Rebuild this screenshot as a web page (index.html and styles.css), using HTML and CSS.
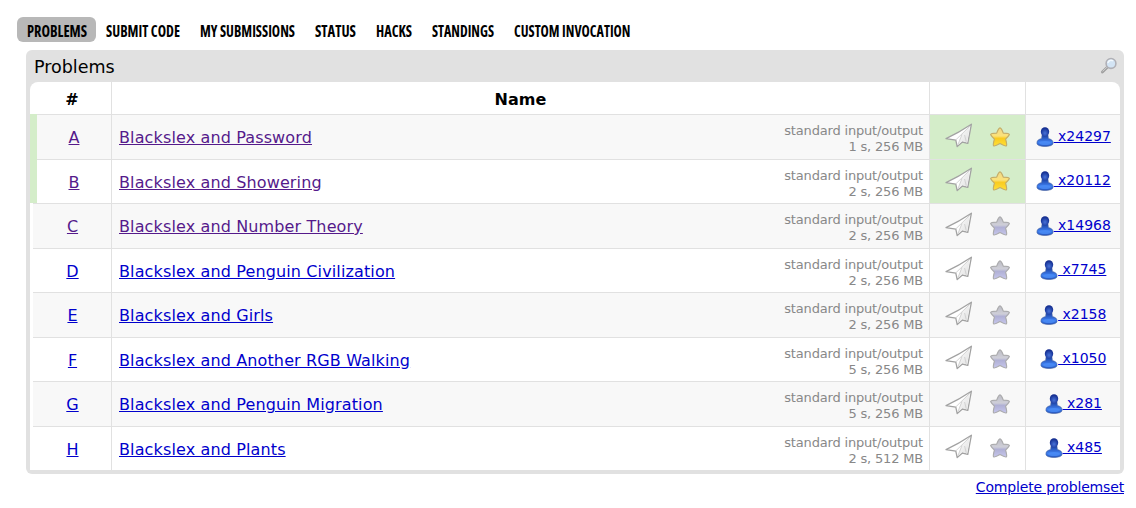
FILE: index.html
```
<!DOCTYPE html>
<html lang="en">
<head>
<meta charset="utf-8">
<title>Problems</title>
<link rel="stylesheet" href="styles.css">
</head>
<body>
<svg class="defs" width="0" height="0" aria-hidden="true">
  <defs>
    <linearGradient id="gold" x1="0" y1="0" x2="0" y2="1"><stop offset="0" stop-color="#f0d98a"/><stop offset=".45" stop-color="#fbe27a"/><stop offset=".58" stop-color="#f9cb20"/><stop offset="1" stop-color="#ffdf35"/></linearGradient>
    <linearGradient id="silver" x1="0" y1="0" x2="0" y2="1"><stop offset="0" stop-color="#bcbcc4"/><stop offset=".45" stop-color="#cfcfd8"/><stop offset=".58" stop-color="#b0b0d4"/><stop offset="1" stop-color="#c6c6ec"/></linearGradient>
    <radialGradient id="head" cx=".5" cy=".65" r=".6"><stop offset="0" stop-color="#4772d8"/><stop offset="1" stop-color="#10298c"/></radialGradient>
    <linearGradient id="body" x1="0" y1="0" x2="0" y2="1"><stop offset="0" stop-color="#153596"/><stop offset=".65" stop-color="#3f80f0"/><stop offset="1" stop-color="#2455bd"/></linearGradient>
    <linearGradient id="fold" x1="0" y1="0" x2="1" y2="1"><stop offset="0" stop-color="#fff"/><stop offset="1" stop-color="#dedede"/></linearGradient>
  </defs>
  <symbol id="plane" viewBox="0 0 28 26">
    <path d="M1 15.6 Q14 9.5 26.4 1.2 L22.8 20.3 17.4 19 12.2 23.6 10.8 17.2Z" fill="#fff" stroke="#a2a2a2" stroke-width="1.3" stroke-linejoin="round"/>
    <path d="M25 3 16.5 11.5 12.8 22 17.5 18 22 19.4Z" fill="url(#fold)"/>
    <path d="M25 3 10.9 16.8M17 11.5 12.8 22M19.6 12 21.2 18.6" fill="none" stroke="#cecece" stroke-width=".9"/>
  </symbol>
  <symbol id="star" viewBox="0 0 20 20">
    <path d="M10 .8Q11.4 1 13.3 6.1 19.2 6.2 19.4 7.6 18.8 9 15.6 12.1 17.3 17.8 16.3 18.9 14.8 19.4 10 16.6 5.2 19.4 3.7 18.9 2.7 17.8 4.4 12.1 1.2 9 .6 7.6 .8 6.2 6.7 6.1 8.6 1 10 .8Z" stroke-width="1.2" stroke-linejoin="round"/>
  </symbol>
  <symbol id="person" viewBox="0 0 18 20">
    <path d="M.9 16.2C.9 13 3.2 12.2 5.6 11.6L6.2 7H11.8L12.4 11.6C14.8 12.2 17.1 13 17.1 16.2 17.1 20.6 .9 20.6 .9 16.2Z" fill="url(#body)" stroke="#4b659f" stroke-width=".6"/>
    <ellipse cx="9" cy="4.8" rx="4.2" ry="4.6" fill="url(#head)"/>
    <ellipse cx="9" cy="16" rx="6" ry="2" fill="#4c8df7" opacity=".75"/>
  </symbol>
</svg>

<nav class="menu">
  <a class="tab current"><svg width="60" height="25"><text x="0" y="20" textLength="60" lengthAdjust="spacingAndGlyphs">PROBLEMS</text></svg></a>
  <a class="tab"><svg width="74" height="25"><text x="0" y="20" textLength="74" lengthAdjust="spacingAndGlyphs">SUBMIT CODE</text></svg></a>
  <a class="tab"><svg width="95" height="25"><text x="0" y="20" textLength="95" lengthAdjust="spacingAndGlyphs">MY SUBMISSIONS</text></svg></a>
  <a class="tab"><svg width="41" height="25"><text x="0" y="20" textLength="41" lengthAdjust="spacingAndGlyphs">STATUS</text></svg></a>
  <a class="tab"><svg width="36" height="25"><text x="0" y="20" textLength="36" lengthAdjust="spacingAndGlyphs">HACKS</text></svg></a>
  <a class="tab"><svg width="62" height="25"><text x="0" y="20" textLength="62" lengthAdjust="spacingAndGlyphs">STANDINGS</text></svg></a>
  <a class="tab"><svg width="117" height="25"><text x="0" y="20" textLength="116.5" lengthAdjust="spacingAndGlyphs">CUSTOM INVOCATION</text></svg></a>
</nav>

<main class="box">
  <div class="caption"><span>Problems</span>
    <svg class="search" width="18" height="18" viewBox="0 0 18 18"><path d="M7.3 10.3 2.4 15" stroke="#a0a0a0" stroke-width="2.8" stroke-linecap="round"/><path d="M7 10.2 2.6 14.4" stroke="#cfcfcf" stroke-width="1"/><circle cx="11" cy="6.5" r="4.9" fill="#d3e4f4" stroke="#b0b0b6" stroke-width="1.6"/><path d="M8 6a3 3 0 0 1 5-2" fill="none" stroke="#f4faff" stroke-width="1.5"/></svg>
  </div>
  <div class="table" id="table">
    <div class="row head"><div class="cell">#</div><div class="cell">Name</div><div class="cell"></div><div class="cell"></div></div>
  </div>
</main>
<footer class="more"><a href="#all">Complete problemset</a></footer>
<script src="problems.js"></script>
</body>
</html>
```
FILE: styles.css
```
body { margin: 0; padding: 17px 12px 0 17px; background: #fff; color: #000; font-family: Verdana, "DejaVu Sans", sans-serif; }
.defs { position: absolute; }
.menu { display: flex; height: 25px; }
.tab { display: flex; height: 25px; padding: 0 10px; border-radius: 6px; }
.tab.current { background: #b8b8b8; padding-right: 9px; margin-right: .4px; }
.tab svg { overflow: visible; }
.tab text { font: bold 15.3px "Open Sans", "Noto Sans", sans-serif; font-stretch: 75%; }
.box { height: 424px; margin: 8px 0 0 9px; padding: 0 4px 4px; box-sizing: border-box; background: #e1e1e1; border-radius: 6px; }
.caption { display: flex; justify-content: space-between; height: 32px; padding: 0 2px 0 4px; font-size: 17.5px; line-height: 34px; }
.search { margin-top: 7px; }
.table { background: #fff; border-radius: 8px 8px 0 0; }
.row { display: grid; grid-template-columns: 81px 818px 96px 95px; height: 44.5px; position: relative; }
.row.head { height: 32px; font-weight: bold; font-size: 16px; line-height: 35px; text-align: center; letter-spacing: .1px; }
.cell { box-sizing: border-box; border-left: 1px solid #e1e1e1; }
.cell:first-child { border-left: 0; padding-left: 3px; }
.problem .cell { border-top: 1px solid #e1e1e1; }
.problem .index { text-align: center; font-size: 16px; line-height: 45px; padding-left: 4px; }
.problem.dark .cell { background: #f8f8f8; }
.problem::before { content: ""; position: absolute; left: 0; top: 0; width: 3px; height: 100%; background: #fff; }
.problem.solved .index { padding-left: 7px; }
.problem.solved::before { width: 7px; background: #d4edc9; }
.problem.solved .actions { background: #d4edc9; }
.name { display: flex; justify-content: space-between; padding: 0 6px 0 7px; font-size: 16px; line-height: 45px; letter-spacing: .13px; }
.limits { padding-top: 8px; font-size: 13px; line-height: 16px; letter-spacing: -.18px; color: #888; text-align: right; }
.actions { display: flex; padding: 7.5px 0 0 15px; }
.star { margin: 4px 0 0 17px; fill: url(#silver); stroke: #ababad; }
.solved .star { fill: url(#gold); stroke: #c4ad68; }
.count { display: flex; justify-content: center; padding: 11.5px 0 0 .5px; font-size: 14px; line-height: 18px; letter-spacing: -.02px; }
a { color: #0000cc; }
.tab { color: #000; }
.visited a { color: #551a8b; }
.visited .count a { color: #0000cc; }
.more { margin-top: 5px; text-align: right; font-size: 14px; line-height: 17px; letter-spacing: -.16px; }
```
FILE: problems.js
```
const problems = [
  ["A", "Password", "1 s, 256 MB", 24297],
  ["B", "Showering", "2 s, 256 MB", 20112],
  ["C", "Number Theory", "2 s, 256 MB", 14968],
  ["D", "Penguin Civilization", "2 s, 256 MB", 7745],
  ["E", "Girls", "2 s, 256 MB", 2158],
  ["F", "Another RGB Walking", "5 s, 256 MB", 1050],
  ["G", "Penguin Migration", "5 s, 256 MB", 281],
  ["H", "Plants", "2 s, 512 MB", 485]
];
document.getElementById("table").insertAdjacentHTML("beforeend", problems.map(([id, name, limits, count], i) => `
  <div class="row problem ${i % 2 ? "" : "dark"} ${i < 2 ? "solved" : ""} ${i < 3 ? "visited" : ""}">
    <div class="cell index"><a href="#${id}">${id}</a></div>
    <div class="cell name"><a href="#${id}">Blackslex and ${name}</a><div class="limits">standard input/output<br>${limits}</div></div>
    <div class="cell actions"><svg width="28" height="26"><use href="#plane"/></svg><svg class="star" width="20" height="20"><use href="#star"/></svg></div>
    <div class="cell count"><svg width="18" height="20"><use href="#person"/></svg><a href="#${id}">&nbsp;x${count}</a></div>
  </div>`).join(""));
```
